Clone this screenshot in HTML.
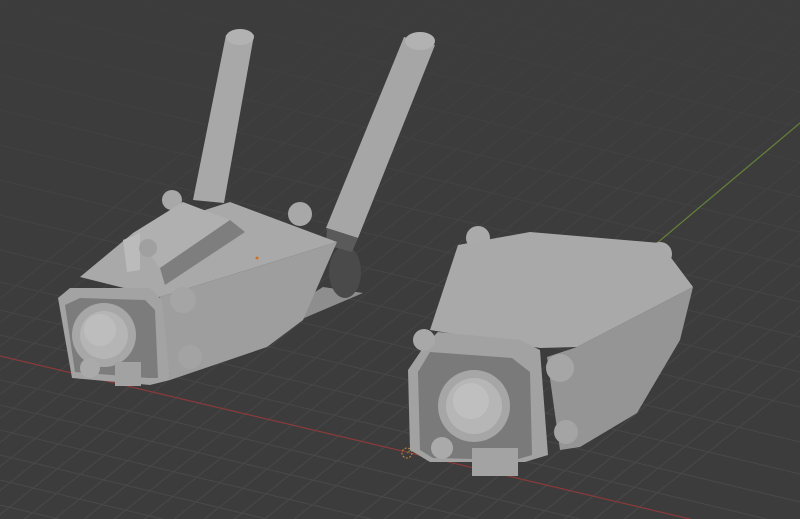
<!DOCTYPE html>
<html><head><style>html,body{margin:0;padding:0;background:#3c3c3c;overflow:hidden;width:800px;height:519px}svg{display:block;position:absolute;left:0;top:0;overflow:hidden}</style></head>
<body>
<svg width="800" height="519" viewBox="0 0 800 519" xmlns="http://www.w3.org/2000/svg" overflow="hidden">
<defs>
<linearGradient id="fade" x1="0" y1="0" x2="0" y2="1">
<stop offset="0" stop-color="#fff" stop-opacity="0.15"/>
<stop offset="0.5" stop-color="#fff" stop-opacity="0.6"/>
<stop offset="1" stop-color="#fff" stop-opacity="1"/>
</linearGradient>
<mask id="m"><rect width="800" height="519" fill="url(#fade)"/></mask>
<clipPath id="c"><rect width="800" height="519"/></clipPath>
</defs>
<g clip-path="url(#c)">
<rect width="800" height="519" fill="#3c3c3c"/>
<g stroke="#4a4a4a" stroke-width="1" mask="url(#m)">
<line x1="0" y1="5" x2="800" y2="197"/><line x1="0" y1="40" x2="800" y2="232"/><line x1="0" y1="75" x2="800" y2="267"/><line x1="0" y1="110" x2="800" y2="302"/><line x1="0" y1="145" x2="800" y2="337"/><line x1="0" y1="180" x2="800" y2="372"/><line x1="0" y1="215" x2="800" y2="407"/><line x1="0" y1="250" x2="800" y2="442"/><line x1="0" y1="282" x2="800" y2="474"/><line x1="0" y1="310" x2="800" y2="502"/><line x1="0" y1="335" x2="800" y2="527"/><line x1="0" y1="380" x2="800" y2="572"/><line x1="0" y1="405" x2="800" y2="597"/><line x1="0" y1="430" x2="800" y2="622"/><line x1="0" y1="455" x2="800" y2="647"/><line x1="0" y1="480" x2="800" y2="672"/><line x1="0" y1="505" x2="800" y2="697"/><line x1="0" y1="-30" x2="800" y2="162"/><line x1="0" y1="-65" x2="800" y2="127"/><line x1="0" y1="-100" x2="800" y2="92"/><line x1="0" y1="-135" x2="800" y2="57"/><line x1="0" y1="-170" x2="800" y2="22"/>
<line x1="-393" y1="613" x2="407" y2="-27"/><line x1="-363" y1="613" x2="437" y2="-27"/><line x1="-333" y1="613" x2="467" y2="-27"/><line x1="-303" y1="613" x2="497" y2="-27"/><line x1="-273" y1="613" x2="527" y2="-27"/><line x1="-243" y1="613" x2="557" y2="-27"/><line x1="-213" y1="613" x2="587" y2="-27"/><line x1="-183" y1="613" x2="617" y2="-27"/><line x1="-153" y1="613" x2="647" y2="-27"/><line x1="-123" y1="613" x2="677" y2="-27"/><line x1="-93" y1="613" x2="707" y2="-27"/><line x1="-63" y1="613" x2="737" y2="-27"/><line x1="-33" y1="613" x2="767" y2="-27"/><line x1="-3" y1="613" x2="797" y2="-27"/><line x1="27" y1="613" x2="827" y2="-27"/><line x1="57" y1="613" x2="857" y2="-27"/><line x1="87" y1="613" x2="887" y2="-27"/><line x1="117" y1="613" x2="917" y2="-27"/><line x1="147" y1="613" x2="947" y2="-27"/><line x1="177" y1="613" x2="977" y2="-27"/><line x1="237" y1="613" x2="1037" y2="-27"/><line x1="267" y1="613" x2="1067" y2="-27"/><line x1="297" y1="613" x2="1097" y2="-27"/><line x1="327" y1="613" x2="1127" y2="-27"/><line x1="357" y1="613" x2="1157" y2="-27"/><line x1="387" y1="613" x2="1187" y2="-27"/><line x1="417" y1="613" x2="1217" y2="-27"/><line x1="447" y1="613" x2="1247" y2="-27"/><line x1="477" y1="613" x2="1277" y2="-27"/><line x1="507" y1="613" x2="1307" y2="-27"/>
</g>
<line x1="0" y1="356" x2="800" y2="545" stroke="#8a3a3a" stroke-width="1.2"/>
<line x1="407" y1="453" x2="800" y2="123" stroke="#65803a" stroke-width="1.2"/>

<g>
<polygon points="323,287 363,293 283,327 270,320" fill="#8e8e8e"/>
<ellipse cx="345" cy="272" rx="16" ry="26" fill="#4a4a4a"/>
<polygon points="226,35 254,35 224,203 193,200" fill="#a8a8a8"/>
<ellipse cx="240" cy="37" rx="14" ry="8" fill="#b2b2b2"/>
<polygon points="404,37 435,45 358,238 326,228" fill="#a6a6a6"/>
<ellipse cx="420" cy="41" rx="15" ry="9" fill="#b2b2b2"/>
<polygon points="327,228 358,238 352,252 326,245" fill="#5a5a5a"/>
<circle cx="172" cy="200" r="10" fill="#a8a8a8"/>
<circle cx="300" cy="214" r="12" fill="#a8a8a8"/>
<polygon points="80,277 133,233 230,202 337,242 160,297" fill="#a9a9a9"/>
<polygon points="337,242 303,320 267,347 170,380 160,297" fill="#9e9e9e"/>
<polygon points="133,233 183,202 230,220 160,268" fill="#b0b0b0"/>
<polygon points="160,268 230,220 245,232 165,285" fill="#7e7e7e"/>
<polygon points="123,240 140,233 140,270 127,272" fill="#bbbbbb"/>
<circle cx="148" cy="248" r="9" fill="#a0a0a0"/>
<polygon points="58,298 70,288 150,288 162,300 170,380 150,385 72,378" fill="#a3a3a3"/>
<polygon points="65,305 80,298 145,300 155,310 158,378 148,378 75,372" fill="#7c7c7c"/>
<circle cx="104" cy="335" r="32" fill="#a7a7a7"/>
<circle cx="104" cy="335" r="24" fill="#b5b5b5"/>
<circle cx="100" cy="330" r="16" fill="#bdbdbd"/>
<circle cx="90" cy="368" r="10" fill="#aaaaaa"/>
<rect x="115" y="362" width="26" height="24" fill="#a2a2a2"/>
<circle cx="183" cy="300" r="13" fill="#a5a5a5"/>
<circle cx="190" cy="357" r="12" fill="#a3a3a3"/>
<circle cx="257" cy="258" r="1.5" fill="#d07020"/>
</g>

<g>
<circle cx="478" cy="238" r="12" fill="#aaaaaa"/>
<circle cx="660" cy="254" r="12" fill="#aaaaaa"/>
<polygon points="458,245 530,232 660,243 693,287 577,347 540,348 430,330" fill="#a9a9a9"/>
<polygon points="693,287 680,340 637,413 580,447 560,450 547,357 577,347" fill="#959595"/>
<polygon points="425,345 438,332 520,340 540,350 548,455 525,462 430,462 410,450 408,370" fill="#a2a2a2"/>
<polygon points="418,372 430,352 512,358 530,372 532,455 515,460 433,458 420,450" fill="#7a7a7a"/>
<circle cx="474" cy="406" r="36" fill="#a6a6a6"/>
<circle cx="474" cy="406" r="28" fill="#b6b6b6"/>
<circle cx="471" cy="401" r="18" fill="#bfbfbf"/>
<circle cx="442" cy="448" r="11" fill="#aaaaaa"/>
<rect x="472" y="448" width="46" height="28" fill="#a3a3a3"/>
<circle cx="424" cy="340" r="11" fill="#a8a8a8"/>
<circle cx="560" cy="368" r="14" fill="#a6a6a6"/>
<circle cx="566" cy="432" r="12" fill="#a4a4a4"/>
</g>
<circle cx="407" cy="453" r="5" fill="none" stroke="#d08a40" stroke-width="1" stroke-dasharray="2,1.5"/>
</g>
</svg>
</body></html>
